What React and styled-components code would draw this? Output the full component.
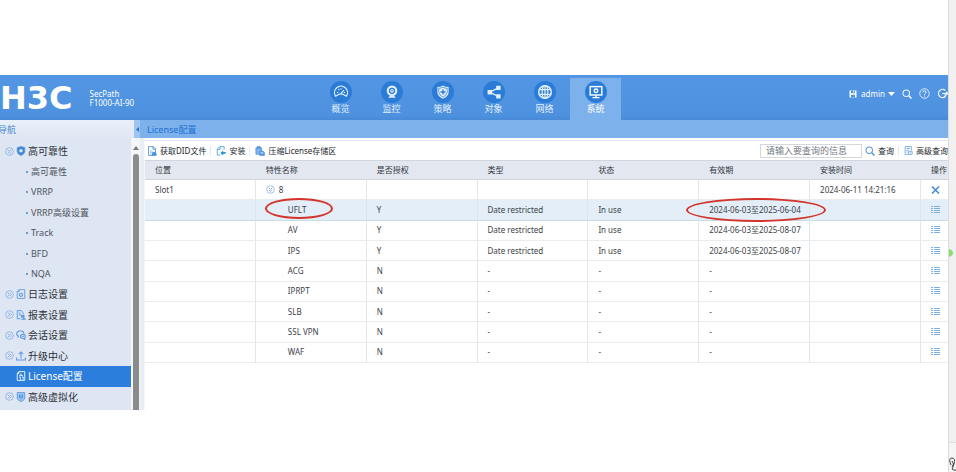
import React from "react";
import styled, { createGlobalStyle, css } from "styled-components";

const GlobalStyle = createGlobalStyle`
  *, *::before, *::after { box-sizing: border-box; }
  body {
    margin: 0;
    background: #fff;
    color: #3c4248;
    font-family: "Noto Sans", "Noto Sans CJK SC", sans-serif;
    font-size: 8px;
    line-height: 12px;
  }
  button, input { font: inherit; color: inherit; }
  button { padding: 0; border: 0; background: none; cursor: pointer; }
  a { color: inherit; text-decoration: none; }
  ul { margin: 0; padding: 0; list-style: none; }
  svg { display: block; flex: none; }
`;

const Page = styled.div`
  display: grid;
  grid-template-columns: minmax(0, 1fr) 8px;
  min-height: 100vh;
`;

const Console = styled.div`
  padding-top: 75px;
  overflow: hidden;
`;

const Gutter = styled.aside`
  display: grid;
  grid-template-rows: 176px 1fr 30px;
  background: #f0f0f0;
  border-left: 1px solid #dcdcdc;
  overflow: hidden;
`;

const GutterTop = styled.div`
  grid-row: 2;
  display: flex;
  align-items: flex-start;
  padding-top: 73px;
`;

const GutterFoot = styled.div`
  grid-row: 3;
  display: flex;
  align-items: flex-end;
  border-top: 1px solid #dedede;
  background: #f5f5f5;
`;

const Header = styled.header`
  display: grid;
  grid-template-columns: minmax(0, 315fr) auto minmax(0, 327fr);
  height: 45px;
  background: linear-gradient(#5296e4, #4d91df 90%, #4789d6);
  color: #fff;
`;

const Brand = styled.div`
  display: flex;
  align-items: center;
  gap: 17px;
`;

const Logo = styled.strong`
  font: bold 32px/32px "DejaVu Sans", sans-serif;
`;

const Model = styled.span`
  display: grid;
  line-height: 9px;
`;

const MainNav = styled.nav`
  display: flex;
  align-items: flex-end;
`;

const NavTab = styled.a`
  display: flex;
  flex-direction: column;
  align-items: center;
  width: 51px;
  height: 42px;
  padding-top: 3px;
  color: #e3effc;
  font-size: 9px;
  ${(p) => p.$active && css`background: #7cb1eb; color: #fff;`}
`;

const Disc = styled.span`
  display: grid;
  place-items: center;
  width: 22px;
  height: 22px;
  border-radius: 50%;
  background: #2b7cd7;
`;

const UserTools = styled.div`
  display: flex;
  align-items: center;
  justify-content: flex-end;
  gap: 7px;
  padding-bottom: 8px;
`;

const Account = styled.div`
  display: flex;
  align-items: center;
  gap: 4px;
`;

const HeaderButton = styled.button`
  display: flex;
  align-items: center;
  gap: 3px;
  color: #fff;
`;

const Workspace = styled.div`
  display: grid;
  grid-template-columns: 131px 9px minmax(0, 1fr);
  grid-template-rows: 18px auto;
`;

const SideHead = styled.div`
  grid-column: 1 / 3;
  display: flex;
  align-items: center;
  justify-content: space-between;
  background: linear-gradient(#eaf0f9, #e0e7f4);
  color: #3f86d2;
  font-size: 9px;
  line-height: 15px;
`;

const SideTitle = styled.span`
  margin-left: -2px;
`;

const Collapse = styled.button`
  display: grid;
  place-items: center;
  width: 6px;
  height: 18px;
  background: #9cc5f2;
`;

const Crumb = styled.div`
  padding: 0 7px;
  background: #7cb1eb;
  color: #2173d2;
  font-size: 9px;
  line-height: 19px;
`;

const SideNav = styled.nav`
  padding: 3px 0;
  background: #dfe6f3;
`;

const SideList = styled.ul`
  display: grid;
  grid-auto-rows: 1fr;
  height: 100%;
`;

const SideLink = styled.a`
  display: flex;
  align-items: center;
  gap: 2px;
  height: 100%;
  padding-left: ${(p) => (p.$leaf ? "16px" : "5px")};
  font-size: 10px;
  color: #2c3138;
  white-space: nowrap;
  ${(p) => p.$active && css`background: #2b7edb; color: #fff;`}
`;

const SubLink = styled.a`
  display: flex;
  align-items: center;
  gap: 3px;
  height: 100%;
  padding-left: 26px;
  font-size: 9px;
  color: #4d535b;
  &::before {
    content: "";
    width: 2px;
    height: 2px;
    background: #6f9bd0;
  }
`;

const ScrollTrack = styled.div`
  display: flex;
  flex-direction: column;
  align-items: center;
  gap: 4px;
  padding-top: 8px;
  background: #f4f6f9;
`;

const ScrollThumb = styled.div`
  flex: 1;
  width: 6px;
  border-radius: 3px 3px 0 0;
  background: #8b8b8b;
`;

const Main = styled.main`
  padding: 2px 0 47px 5px;
  background: linear-gradient(90deg, #e9eef2 4px, #fff 5px);
`;

const Toolbar = styled.div`
  display: flex;
  align-items: center;
  height: 20px;
  border-top: 1px solid #dfe5ec;
  background: #fff;
  white-space: nowrap;
`;

const ToolButton = styled.button`
  display: flex;
  align-items: center;
  gap: 3px;
  padding: 0 0 0 2px;
  color: #23282d;
`;

const Divider = styled.span`
  width: 1px;
  height: 10px;
  margin: 0 3px 0 4px;
  background: #e6eaee;
`;

const Spacer = styled.span`
  flex: 1;
`;

const SearchInput = styled.input`
  width: 102px;
  height: 14px;
  margin-right: 1px;
  padding: 0 5px;
  border: 1px solid #d4d8dd;
  border-radius: 0;
  background: #fff;
  font-size: 9px;
  &::placeholder { color: #74797f; opacity: 1; }
`;

const Table = styled.table`
  width: 100%;
  height: 203px;
  table-layout: fixed;
  border-collapse: separate;
  border-spacing: 0;
  background: #fff;
`;

const ActionCol = styled.col`
  width: 27px;
`;

const HeadCell = styled.th`
  height: 20px;
  padding: 0 0 0 10px;
  border-top: 1px solid #cfd6dc;
  border-bottom: 1px solid #d0d5dc;
  background: #e3e8f0;
  color: #2f353b;
  font-weight: 400;
  text-align: left;
  white-space: nowrap;
`;

const Row = styled.tr`
  background: ${(p) => (p.$current ? "#e3eef8" : "#fff")};
`;

const Cell = styled.td`
  position: relative;
  height: 20px;
  padding: 0 0 0 ${(p) => (p.$indent ? "32px" : "10px")};
  border-bottom: 1px solid ${(p) => (p.$current ? "#c9dce6" : "#e9edf0")};
  border-right: 1px solid ${(p) => (p.$current ? "#d8e6ef" : "#e3e7ea")};
  white-space: nowrap;
  &:last-child { border-right: 0; }
`;

const Group = styled.button`
  display: flex;
  align-items: center;
  gap: 4px;
`;

const Ring = styled.span`
  position: absolute;
  top: -2px;
  left: ${(p) => (p.$wide ? "-13px" : "9px")};
  width: ${(p) => (p.$wide ? "140px" : "68px")};
  height: ${(p) => (p.$wide ? "24px" : "21px")};
  border: 2px solid #d3342b;
  border-radius: 50%;
  z-index: 1;
  pointer-events: none;
`;

const Svg = ({ size = 9, box = 16, children, ...rest }) => (
  <svg width={size} height={size} viewBox={`0 0 ${box} ${box}`} fill="none" stroke="currentColor" strokeWidth="1.5" aria-hidden="true" {...rest}>
    {children}
  </svg>
);

const navIcons = {
  gauge: (
    <Svg size={16}>
      <path d="M2.6 12.2A6.5 6.5 0 1 1 13.4 12.2L10.8 10.8Q8 9 5.2 10.8Z" strokeWidth="1.2" />
      <path d="M4 8.2l1.2.5M5.4 5.2l.9 1M8 4.2v1.2M12 8.2l-1.2.5M8 9.4l3-3.2" strokeWidth="1.1" />
    </Svg>
  ),
  camera: (
    <Svg size={16}>
      <circle cx="8" cy="6.8" r="5.3" fill="currentColor" stroke="none" />
      <circle cx="8" cy="6.8" r="2.5" stroke="#2b7cd7" strokeWidth="1.3" />
      <circle cx="8" cy="6.8" r=".7" fill="#2b7cd7" stroke="none" />
      <path d="M4.2 13.8h7.6L10 11.6H6z" fill="currentColor" stroke="none" />
    </Svg>
  ),
  shield: (
    <Svg size={16}>
      <path d="M8 1.5q2.500 1.500 5.600 1.600v5.300q-.3 4-5.600 6.400-5.300-2.400-5.600-6.400V3.100Q5.500 3 8 1.500z" fill="currentColor" stroke="none" />
      <path d="M8 3.200q1.800 1 4.200 1.100v4q-.3 2.900-4.200 4.900-3.900-2-4.200-4.900v-4Q6.200 4.200 8 3.200z" stroke="#2b7cd7" strokeWidth=".7" />
      <path d="M8 5.500v5M5.500 8h5" stroke="#2b7cd7" strokeWidth="1.400" />
    </Svg>
  ),
  share: (
    <Svg size={16}>
      <path d="M12.300 3.800L3.800 8.200l8.500 4.300" strokeWidth="1.300" />
      <path d="M10.200 1.700h4.400v4.400h-4.400zM1.600 6h4.400v4.400H1.600zM10.200 10.200h4.400v4.400h-4.400z" fill="currentColor" stroke="none" />
    </Svg>
  ),
  globe: (
    <Svg size={16}>
      <circle cx="8" cy="8" r="6.300" />
      <ellipse cx="8" cy="8" rx="2.900" ry="6.300" strokeWidth="1.200" />
      <path d="M8 1.700v12.600M2.300 5.600h11.400M2.300 10.400h11.400" strokeWidth="1.200" />
    </Svg>
  ),
  monitor: (
    <Svg size={16}>
      <rect x="2.200" y="2.600" width="11.600" height="8.400" strokeWidth="1.400" />
      <circle cx="8" cy="6.800" r="1.800" strokeWidth="1.300" />
      <path d="M8 11v2M4.500 13.600h7" strokeWidth="1.400" />
    </Svg>
  ),
};

const SaveIcon = () => (
  <Svg size={8}>
    <path d="M1 1h14v14H1z" fill="currentColor" stroke="none" />
    <path d="M4 1h8v5.500H4zM4 9.500h8V15H4z" fill="#5094e2" stroke="none" />
    <path d="M9.500 1v4" strokeWidth="2" />
  </Svg>
);
const SearchIcon = ({ size = 10, color }) => (
  <Svg size={size} color={color}>
    <circle cx="6.800" cy="6.800" r="5.400" strokeWidth="1.600" />
    <path d="M10.800 10.800l4.300 4.300" strokeWidth="2.200" />
  </Svg>
);
const HelpIcon = () => (
  <Svg size={11}>
    <circle cx="8" cy="8" r="6.900" strokeWidth="1.200" />
    <path d="M5.700 6.400q0-2.300 2.300-2.300t2.300 2.100q0 1.200-1.200 1.900T8 9.900M8 11v1.400" strokeWidth="1.400" />
  </Svg>
);
const LogoutIcon = () => (
  <Svg size={11}>
    <path d="M12 3.600A5.900 5.900 0 1 0 12 12.400V9" strokeWidth="1.700" />
    <path d="M7.500 8h8M13 5.500L15.500 8 13 10.500" strokeWidth="1.500" />
  </Svg>
);
const Caret = () => (
  <svg width="7" height="4" viewBox="0 0 7 4" aria-hidden="true"><path d="M0 0h7L3.500 4z" fill="currentColor" /></svg>
);
const ToggleIcon = ({ right }) => (
  <Svg size={9} color="#77a7df">
    <circle cx="8" cy="8" r="6.800" strokeWidth="1.200" />
    {right ? (
      <path d="M5 4.800L8 8l-3 3.200M8.300 4.800l3 3.200-3 3.200" strokeWidth="1.300" />
    ) : (
      <path d="M4.800 4.800L8 7.800l3.200-3M4.800 8.200L8 11.300l3.200-3.100" strokeWidth="1.300" />
    )}
  </Svg>
);

const DocPath = <path d="M2.500 1h7.500l3.500 3.500V15h-11zM9.500 1v4h4" strokeWidth="1.400" />;

const sideIcons = {
  shield: (
    <Svg size={10} color="#5b98de">
      <path d="M8 1l6 1.500V9q-.5 4-6 6.200Q2.500 13 2 9V2.500z" fill="#3f85d6" />
      <circle cx="8" cy="7.500" r="2.800" fill="#dcebfc" stroke="none" />
    </Svg>
  ),
  log: (
    <Svg size={10} color="#5e9ade">
      <path d="M5 1h9v14H2V4zM5 1v3H2" strokeWidth="1.400" />
      <circle cx="8" cy="9.300" r="2.500" strokeWidth="1.700" />
    </Svg>
  ),
  report: (
    <Svg size={10} color="#5e9ade">
      <path d="M11.500 6V4.500L8.500 1H2v13h5M4.500 5h3M4.500 8h3.500" strokeWidth="1.600" />
      <path d="M8.500 8h4.500v4H8.500zM13 12.500l2.500 2.500H8" fill="currentColor" strokeWidth="1" />
    </Svg>
  ),
  chat: (
    <Svg size={10} color="#5e9ade">
      <path d="M3.500 12.500v-3Q1 8.500 1 6t3-4 6 0 2.500 4" strokeWidth="1.800" />
      <path d="M7 10q0-3.300 4-3.300t4 3.300q0 1.500-1 2.200V15l-2.500-1.800Q7 13.300 7 10zM9 10h4" strokeWidth="1.700" />
    </Svg>
  ),
  upload: (
    <Svg size={10} color="#5e9ade">
      <path d="M8 12V2M4.500 5L8 1.500 11.500 5M1 10.500v4h14v-4" strokeWidth="1.700" />
    </Svg>
  ),
  license: (
    <Svg size={10}>
      <path d="M4.500 1H14v14H2V4zM4.500 1v3H2M5 7h6M8 4v3" strokeWidth="1.400" />
      <path d="M5 9.500h2V14M9.500 9.500h2V14" strokeWidth="1.400" />
    </Svg>
  ),
  virtual: (
    <Svg size={10} color="#4b8edb">
      <path d="M2 1h12v9q-1 3.500-6 5.300Q3 13.500 2 10z" fill="#a9ccf3" strokeWidth="1.300" />
      <path d="M5.500 4v6M8 4v8M10.500 4v6" strokeWidth="1.600" />
    </Svg>
  ),
};

const toolIcons = {
  fetch: (
    <Svg size={10} color="#4a90dc">
      {DocPath}
      <path d="M4.800 8h4M4.800 11h3M9 10h4l2.500 4.500H8z" fill="currentColor" strokeWidth="1" />
    </Svg>
  ),
  install: (
    <Svg size={10} color="#4da3e6">
      <path d="M7 14.500H2V5l4-4h7v5M6.500 1v4.500H2" strokeWidth="1.400" />
      <path d="M7 11l4.500-4v2.500h4v3h-4V15z" fill="#2495de" stroke="none" />
    </Svg>
  ),
  compress: (
    <Svg size={10} color="#4a90dc">
      <path d="M1.500 3h9v10h-9zM3.500 1h5v2.500h-5z" fill="#85b6ec" strokeWidth="1.300" />
      <path d="M7.500 8h5l2.500 2.500V15H7.500z" fill="#5e9fe2" strokeWidth="1.200" />
      <path d="M9 11h4" stroke="#fff" strokeWidth="1.200" />
    </Svg>
  ),
  advanced: (
    <Svg size={9} color="#6aa4e2">
      <path d="M7 15H2V1h11v7M4.500 4.500h6M4.500 7.500h4M4.500 10.500h2" strokeWidth="1.500" />
      <path d="M8 9.500h6.500V15H8zM10 12.200h3" strokeWidth="1.400" />
    </Svg>
  ),
};

const ListIcon = () => (
  <svg width="9" height="8" viewBox="0 0 9 8" fill="none" stroke="#7fb0dc" aria-hidden="true">
    <path d="M0 .5h2M0 2.500h2M0 4.500h2M0 6.500h2M3 .5h6M3 2.500h6M3 4.500h6M3 6.500h6" />
  </svg>
);
const RemoveIcon = () => (
  <svg width="9" height="8" viewBox="0 0 9 8" fill="none" stroke="#4a8ed2" strokeWidth="1.600" aria-hidden="true">
    <path d="M1 .5l7 7M8 .5l-7 7" />
  </svg>
);

const tabs = [
  ["概览", "gauge"],
  ["监控", "camera"],
  ["策略", "shield"],
  ["对象", "share"],
  ["网络", "globe"],
  ["系统", "monitor"],
];

const sections = [
  { label: "高可靠性", icon: "shield", open: true },
  { label: "高可靠性", sub: true },
  { label: "VRRP", sub: true },
  { label: "VRRP高级设置", sub: true },
  { label: "Track", sub: true },
  { label: "BFD", sub: true },
  { label: "NQA", sub: true },
  { label: "日志设置", icon: "log" },
  { label: "报表设置", icon: "report" },
  { label: "会话设置", icon: "chat" },
  { label: "升级中心", icon: "upload" },
  { label: "License配置", icon: "license", leaf: true },
  { label: "高级虚拟化", icon: "virtual" },
];

const columns = ["位置", "特性名称", "是否授权", "类型", "状态", "有效期", "安装时间", "操作"];

const features = [
  ["UFLT", "Y", "Date restricted", "In use", "2024-06-03至2025-06-04"],
  ["AV", "Y", "Date restricted", "In use", "2024-06-03至2025-08-07"],
  ["IPS", "Y", "Date restricted", "In use", "2024-06-03至2025-08-07"],
  ["ACG", "N", "-", "-", "-"],
  ["IPRPT", "N", "-", "-", "-"],
  ["SLB", "N", "-", "-", "-"],
  ["SSL VPN", "N", "-", "-", "-"],
  ["WAF", "N", "-", "-", "-"],
];

function FeatureRow({ data, current }) {
  const [name, granted, type, state, period] = data;
  return (
    <Row $current={current}>
      <Cell $current={current} />
      <Cell $current={current} $indent>
        {name}
        {current && <Ring />}
      </Cell>
      <Cell $current={current}>{granted}</Cell>
      <Cell $current={current}>{type}</Cell>
      <Cell $current={current}>{state}</Cell>
      <Cell $current={current}>
        {period}
        {current && <Ring $wide />}
      </Cell>
      <Cell $current={current} />
      <Cell $current={current}>
        <Group aria-label={`${name} 详情`}><ListIcon /></Group>
      </Cell>
    </Row>
  );
}

export default function App() {
  return (
    <>
      <GlobalStyle />
      <Page lang="zh-CN">
        <Console>
          <Header>
            <Brand>
              <Logo>H3C</Logo>
              <Model><span>SecPath</span><span>F1000-AI-90</span></Model>
            </Brand>
            <MainNav>
              {tabs.map(([label, icon]) => (
                <NavTab key={label} href="#" $active={label === "系统"}>
                  <Disc>{navIcons[icon]}</Disc>
                  {label}
                </NavTab>
              ))}
            </MainNav>
            <UserTools>
              <Account>
                <HeaderButton aria-label="保存"><SaveIcon /></HeaderButton>
                <HeaderButton>admin<Caret /></HeaderButton>
              </Account>
              <HeaderButton aria-label="搜索"><SearchIcon /></HeaderButton>
              <HeaderButton aria-label="帮助"><HelpIcon /></HeaderButton>
              <HeaderButton aria-label="退出"><LogoutIcon /></HeaderButton>
            </UserTools>
          </Header>

          <Workspace>
            <SideHead>
              <SideTitle>导航</SideTitle>
              <Collapse aria-label="收起导航">
                <svg width="3" height="5" viewBox="0 0 3 5" aria-hidden="true"><path d="M3 0v5L0 2.500z" fill="#2b72c4" /></svg>
              </Collapse>
            </SideHead>
            <Crumb>License配置</Crumb>

            <SideNav>
              <SideList>
                {sections.map((item) => (
                  <li key={item.label + (item.icon || "")}>
                    {item.sub ? (
                      <SubLink href="#">{item.label}</SubLink>
                    ) : (
                      <SideLink href="#" $leaf={item.leaf} $active={item.leaf}>
                        {!item.leaf && <ToggleIcon right={!item.open} />}
                        {sideIcons[item.icon]}
                        {item.label}
                      </SideLink>
                    )}
                  </li>
                ))}
              </SideList>
            </SideNav>
            <ScrollTrack>
              <svg width="6" height="4" viewBox="0 0 6 4" aria-hidden="true"><path d="M3 0l3 4H0z" fill="#7b7b7b" /></svg>
              <ScrollThumb />
            </ScrollTrack>

            <Main>
              <Toolbar>
                <ToolButton>{toolIcons.fetch}获取DID文件</ToolButton>
                <Divider />
                <ToolButton>{toolIcons.install}安装</ToolButton>
                <Divider />
                <ToolButton>{toolIcons.compress}压缩License存储区</ToolButton>
                <Spacer />
                <SearchInput aria-label="查询信息" placeholder="请输入要查询的信息" />
                <ToolButton><SearchIcon color="#4a8fd8" />查询</ToolButton>
                <Divider />
                <ToolButton>{toolIcons.advanced}高级查询</ToolButton>
              </Toolbar>
              <Table>
                <colgroup>
                  {columns.slice(1).map((c) => <col key={c} />)}
                  <ActionCol />
                </colgroup>
                <thead>
                  <tr>{columns.map((c) => <HeadCell key={c} scope="col">{c}</HeadCell>)}</tr>
                </thead>
                <tbody>
                  <Row>
                    <Cell>Slot1</Cell>
                    <Cell><Group><ToggleIcon />8</Group></Cell>
                    <Cell /><Cell /><Cell /><Cell />
                    <Cell>2024-06-11 14:21:16</Cell>
                    <Cell><Group aria-label="删除"><RemoveIcon /></Group></Cell>
                  </Row>
                  {features.map((f, i) => <FeatureRow key={f[0]} data={f} current={i === 0} />)}
                </tbody>
              </Table>
            </Main>
          </Workspace>
        </Console>

        <Gutter>
          <GutterTop>
            <svg width="4" height="8" viewBox="0 0 4 8" aria-hidden="true"><path d="M0 0q4 1 4 4t-4 4z" fill="#8bdc6c" /></svg>
          </GutterTop>
          <GutterFoot>
            <svg width="7" height="15" viewBox="0 0 7 15" fill="none" stroke="#444" aria-hidden="true">
              <path d="M2 8Q-1 1 3 1t2 6-2 5q2 2 4 1M3 4q3 3 0 6" />
            </svg>
          </GutterFoot>
        </Gutter>
      </Page>
    </>
  );
}
